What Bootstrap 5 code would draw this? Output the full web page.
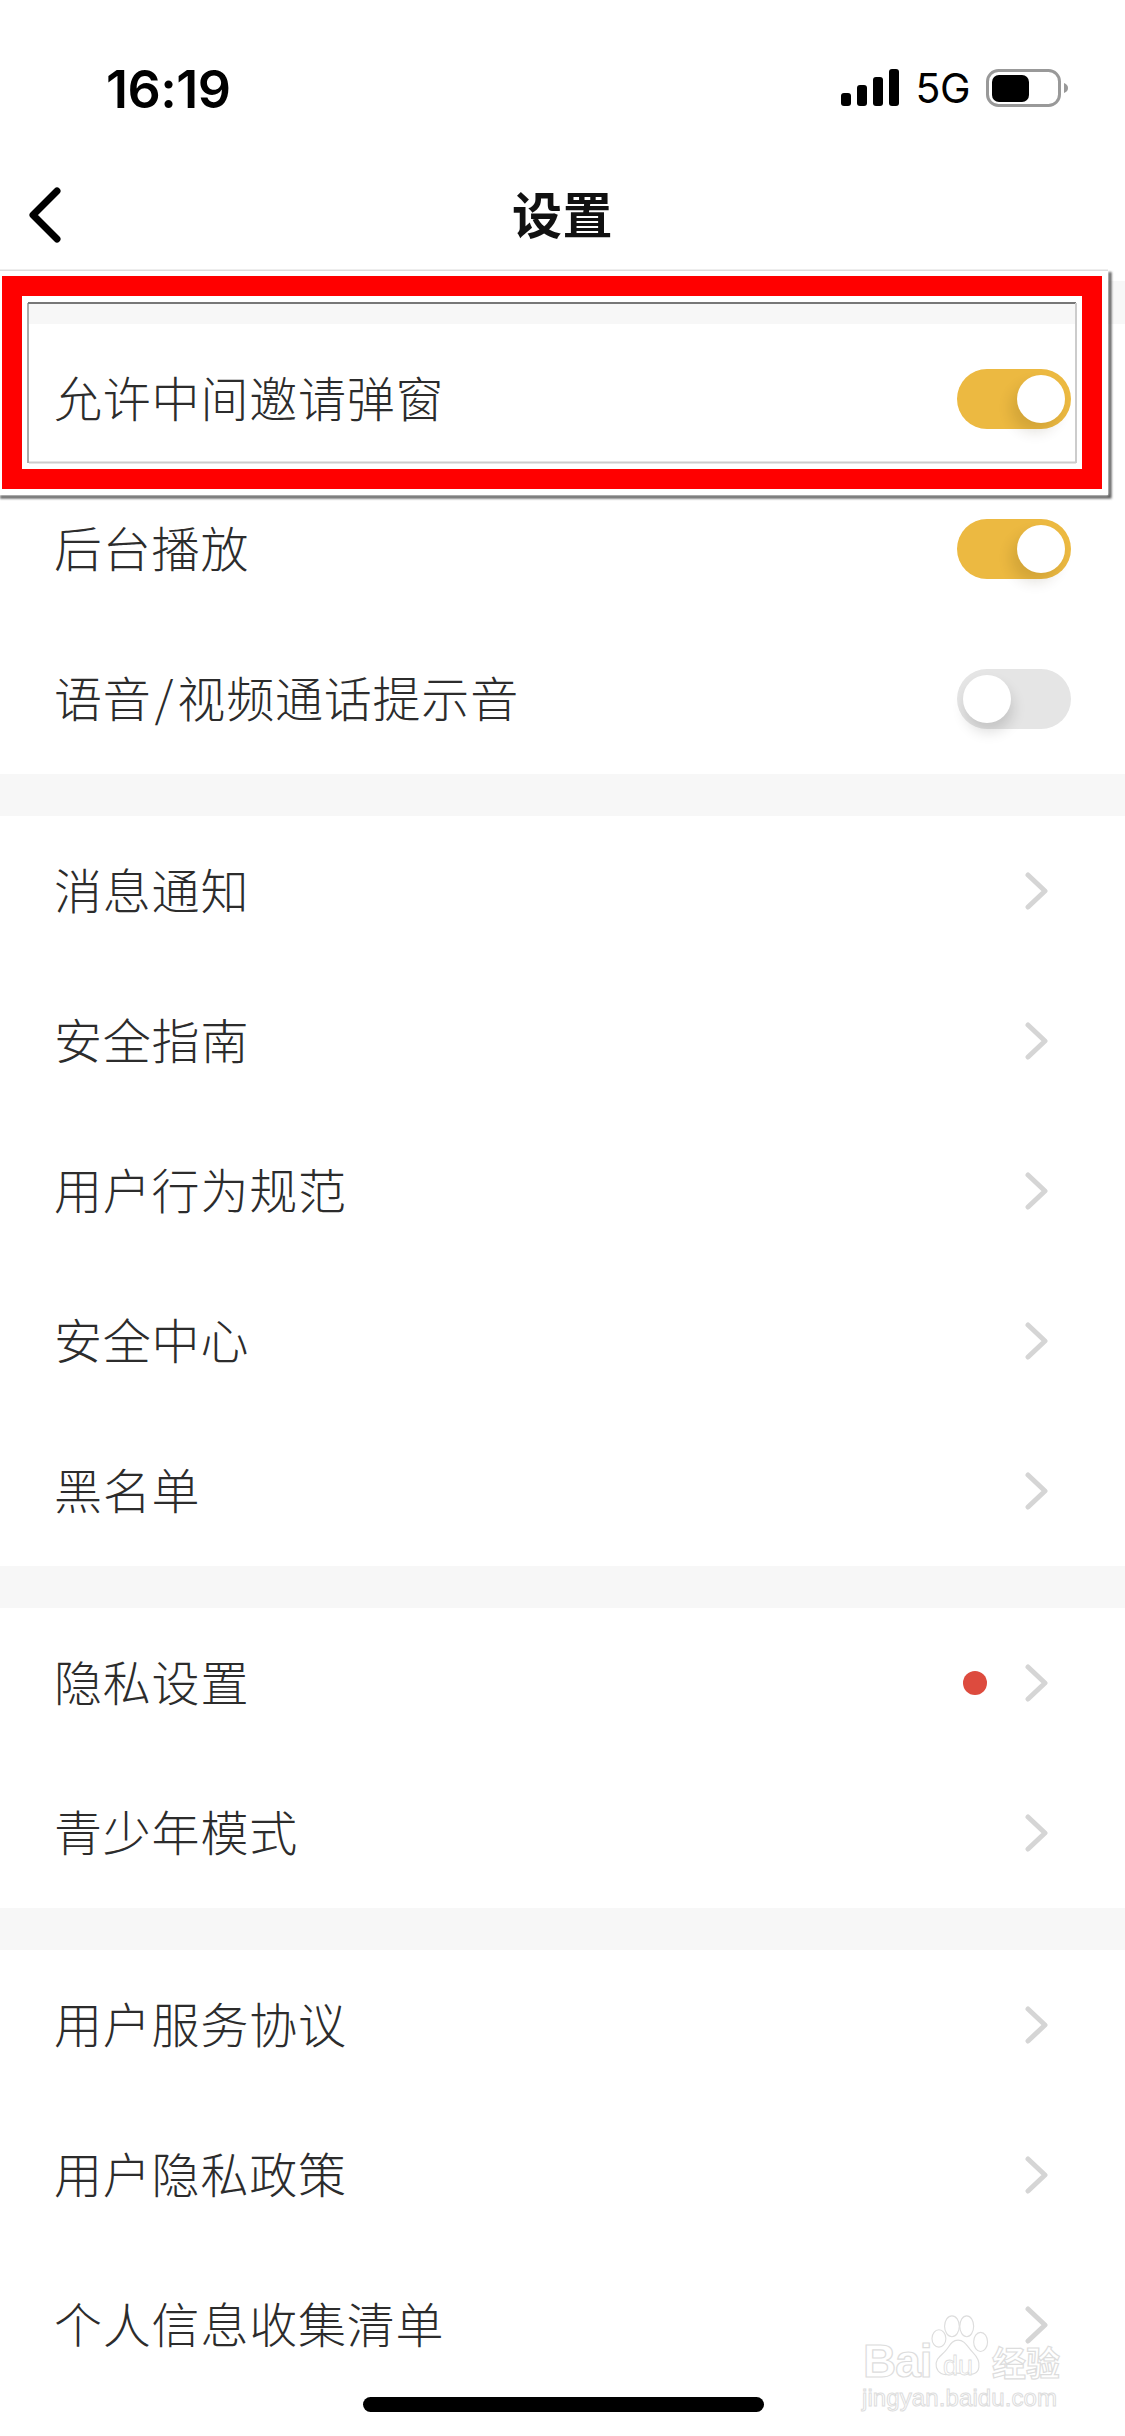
<!DOCTYPE html>
<html lang="zh">
<head>
<meta charset="utf-8">
<title>设置</title>
<link rel="stylesheet" href="https://cdn.jsdelivr.net/npm/bootstrap@5.3.0/dist/css/bootstrap.min.css">
<style>
html,body{margin:0;background:#fff;}
body{width:1125px;height:2436px;overflow:hidden;position:relative;font-family:"Noto Sans CJK SC","Liberation Sans",sans-serif;}
.status-zone{height:139px;padding:0 56px 0 106px;}
.clock{font:600 52px/1 Inter,"Liberation Sans",sans-serif;letter-spacing:-.5px;margin-top:64px;}
.net{font:400 41px/1 Inter,"Liberation Sans",sans-serif;letter-spacing:-.5px;}
.status-right{margin-top:69px;height:38px;}
.head-zone{height:142px;position:relative;}
.head-title{font-size:50px;font-weight:700;color:#111;line-height:1;margin-top:3px;letter-spacing:.5px;}
.back-ico{position:absolute;left:27px;top:46px;}
.sep-band{height:42px;background:#f7f7f7;}
.sep-first{height:43px;}
.set-row{height:150px;padding:0 54px 0 54px;background:#fff;}
.set-label{font-size:48px;color:#2c2c2c;line-height:1;font-weight:300;letter-spacing:.8px;margin-top:-6px;}
.slash-gap{padding:0 3px;}
.tog{width:114px;height:60px;border-radius:30px;position:relative;}
.tog-on{background:#ecb941;}
.tog-off{background:#e5e5e5;}
.tog-knob{position:absolute;top:6px;width:48px;height:48px;border-radius:50%;background:#fff;}
.tog-on .tog-knob{right:6px;box-shadow:-6px 9px 14px rgba(60,40,0,.14);}
.tog-off .tog-knob{left:6px;box-shadow:2px 9px 14px rgba(0,0,0,.14);}
.chev{margin-right:22px;display:block;}
.red-dot{width:24px;height:24px;border-radius:50%;background:#dd4b3e;margin-right:38px;}
.mark-box{position:absolute;left:0;top:264px;}
.home-bar{position:absolute;left:363px;top:2397px;width:401px;height:15px;border-radius:8px;background:#000;}
.wm{position:absolute;left:862px;top:2315px;width:206px;height:110px;}
.wm-word{font:700 46px/1 "Liberation Sans",sans-serif;color:#fff;-webkit-text-stroke:1.2px #ddd;position:absolute;left:1px;top:23px;letter-spacing:-1px;}
.wm-paw{position:absolute;left:69px;top:0;}
.wm-du{font:400 27px/1 "Liberation Sans",sans-serif;color:#fff;-webkit-text-stroke:.8px #ddd;position:absolute;left:81px;top:38px;}
.wm-cn{font:700 34px/1 "Noto Sans CJK SC",sans-serif;color:#fff;-webkit-text-stroke:1.2px #ddd;position:absolute;left:130px;top:30px;}
.wm-url{font:400 24px/1 "Liberation Sans",sans-serif;color:#fff;-webkit-text-stroke:1px #ddd;position:absolute;left:0;top:71px;letter-spacing:.1px;}
</style>
</head>
<body>
<div class="status-zone d-flex justify-content-between align-items-start">
  <div class="clock text-black">16:19</div>
  <div class="status-right d-flex align-items-center">
    <svg width="58" height="38" viewBox="0 0 58 38" class="me-3"><rect x="0" y="24" width="10" height="13" rx="3"/><rect x="16" y="16" width="10" height="21" rx="3"/><rect x="32" y="8" width="10" height="29" rx="3"/><rect x="48" y="0" width="10" height="37" rx="3"/></svg>
    <span class="net text-black">5G</span>
    <svg width="83" height="38" viewBox="0 0 83 38" class="ms-3"><rect x="1.5" y="1.5" width="72" height="35" rx="11" fill="none" stroke="#999" stroke-width="3"/><rect x="6" y="6" width="37" height="27" rx="7"/><path d="M78 14c3 1 4 3 4 5s-1 4-4 5z" fill="#999"/></svg>
  </div>
</div>
<div class="head-zone d-flex align-items-center justify-content-center">
  <svg class="back-ico" width="36" height="60" viewBox="0 0 36 60"><path d="M30 6 6 30l24 24" fill="none" stroke="#000" stroke-width="7" stroke-linecap="round" stroke-linejoin="round"/></svg>
  <div class="head-title">设置</div>
</div>

<div class="sep-band sep-first"></div>
<div class="set-row d-flex align-items-center justify-content-between"><span class="set-label">允许中间邀请弹窗</span><div class="tog tog-on"><div class="tog-knob"></div></div></div>
<div class="set-row d-flex align-items-center justify-content-between"><span class="set-label">后台播放</span><div class="tog tog-on"><div class="tog-knob"></div></div></div>
<div class="set-row d-flex align-items-center justify-content-between"><span class="set-label">语音<span class="slash-gap">/</span>视频通话提示音</span><div class="tog tog-off"><div class="tog-knob"></div></div></div>

<div class="sep-band"></div>
<div class="set-row d-flex align-items-center justify-content-between"><span class="set-label">消息通知</span><svg class="chev" width="24" height="38" viewBox="0 0 24 38"><path d="M3 3 20 19 3 35" fill="none" stroke="#d5d5d5" stroke-width="5" stroke-linecap="round" stroke-linejoin="round"/></svg></div>
<div class="set-row d-flex align-items-center justify-content-between"><span class="set-label">安全指南</span><svg class="chev" width="24" height="38" viewBox="0 0 24 38"><path d="M3 3 20 19 3 35" fill="none" stroke="#d5d5d5" stroke-width="5" stroke-linecap="round" stroke-linejoin="round"/></svg></div>
<div class="set-row d-flex align-items-center justify-content-between"><span class="set-label">用户行为规范</span><svg class="chev" width="24" height="38" viewBox="0 0 24 38"><path d="M3 3 20 19 3 35" fill="none" stroke="#d5d5d5" stroke-width="5" stroke-linecap="round" stroke-linejoin="round"/></svg></div>
<div class="set-row d-flex align-items-center justify-content-between"><span class="set-label">安全中心</span><svg class="chev" width="24" height="38" viewBox="0 0 24 38"><path d="M3 3 20 19 3 35" fill="none" stroke="#d5d5d5" stroke-width="5" stroke-linecap="round" stroke-linejoin="round"/></svg></div>
<div class="set-row d-flex align-items-center justify-content-between"><span class="set-label">黑名单</span><svg class="chev" width="24" height="38" viewBox="0 0 24 38"><path d="M3 3 20 19 3 35" fill="none" stroke="#d5d5d5" stroke-width="5" stroke-linecap="round" stroke-linejoin="round"/></svg></div>

<div class="sep-band"></div>
<div class="set-row d-flex align-items-center justify-content-between"><span class="set-label">隐私设置</span><div class="d-flex align-items-center"><div class="red-dot"></div><svg class="chev" width="24" height="38" viewBox="0 0 24 38"><path d="M3 3 20 19 3 35" fill="none" stroke="#d5d5d5" stroke-width="5" stroke-linecap="round" stroke-linejoin="round"/></svg></div></div>
<div class="set-row d-flex align-items-center justify-content-between"><span class="set-label">青少年模式</span><svg class="chev" width="24" height="38" viewBox="0 0 24 38"><path d="M3 3 20 19 3 35" fill="none" stroke="#d5d5d5" stroke-width="5" stroke-linecap="round" stroke-linejoin="round"/></svg></div>

<div class="sep-band"></div>
<div class="set-row d-flex align-items-center justify-content-between"><span class="set-label">用户服务协议</span><svg class="chev" width="24" height="38" viewBox="0 0 24 38"><path d="M3 3 20 19 3 35" fill="none" stroke="#d5d5d5" stroke-width="5" stroke-linecap="round" stroke-linejoin="round"/></svg></div>
<div class="set-row d-flex align-items-center justify-content-between"><span class="set-label">用户隐私政策</span><svg class="chev" width="24" height="38" viewBox="0 0 24 38"><path d="M3 3 20 19 3 35" fill="none" stroke="#d5d5d5" stroke-width="5" stroke-linecap="round" stroke-linejoin="round"/></svg></div>
<div class="set-row d-flex align-items-center justify-content-between"><span class="set-label">个人信息收集清单</span><svg class="chev" width="24" height="38" viewBox="0 0 24 38"><path d="M3 3 20 19 3 35" fill="none" stroke="#d5d5d5" stroke-width="5" stroke-linecap="round" stroke-linejoin="round"/></svg></div>

<svg class="mark-box" width="1125" height="240" viewBox="0 0 1125 240" fill="none">
  <defs><filter id="sh" x="-2%" y="-10%" width="104%" height="120%"><feGaussianBlur stdDeviation="1"/></filter></defs>
  <path d="M1110 8V233H0" stroke="#555" stroke-width="3" filter="url(#sh)"/>
  <path d="M0 6.500H1108" stroke="#ddd" stroke-width="2"/>
  <path fill-rule="evenodd" fill="#fff" d="M0 7H1108V231H0zM22 32V205H1082V32z"/>
  <path fill-rule="evenodd" fill="#f00" d="M2 12H1102V225H2zM22 32V205H1082V32z"/>
  <path fill-rule="evenodd" fill="#fff" d="M22 32H1082V205H22zM29 39V199H1076V39z"/>
  <path d="M28 39V199" stroke="#aaa" stroke-width="2"/>
  <path d="M28 39H1076" stroke="#777" stroke-width="2"/>
  <path d="M29 198.500H1076M1076 39V199" stroke="#ccc" stroke-width="2"/>
</svg>

<div class="wm" aria-label="Baidu 经验">
  <span class="wm-word">Bai</span>
  <svg class="wm-paw" width="61" height="66" viewBox="0 0 70 76" fill="#fff" stroke="#ddd" stroke-width="1.300">
    <ellipse cx="24" cy="13" rx="8.500" ry="12"/><ellipse cx="41" cy="13" rx="8" ry="12"/><ellipse cx="9" cy="27" rx="8" ry="10"/><ellipse cx="57" cy="31" rx="8" ry="11"/>
    <path d="M31 29c8 0 11 8 17 14s8 11 7 17c-1 8-8 9-14 8-6-1-14-2-20 0-7 2-13-1-15-8-2-9 5-13 10-18s7-13 15-13z"/>
  </svg>
  <span class="wm-du">du</span>
  <span class="wm-cn">经验</span>
  <span class="wm-url">jingyan.baidu.com</span>
</div>
<div class="home-bar"></div>
<script src="https://cdn.jsdelivr.net/npm/bootstrap@5.3.0/dist/js/bootstrap.bundle.min.js"></script>
</body>
</html>
